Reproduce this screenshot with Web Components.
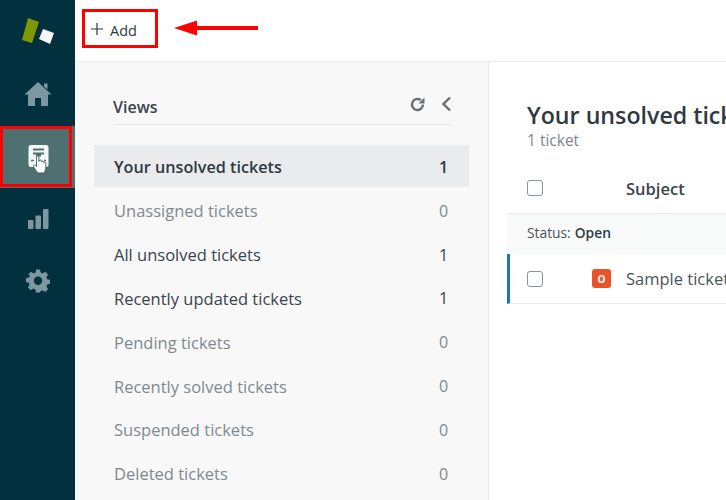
<!DOCTYPE html>
<html><head><meta charset="utf-8"><style>
html,body{margin:0;padding:0;width:726px;height:500px;overflow:hidden;background:#fff;font-family:"Open Sans","Noto Sans",sans-serif}
</style></head><body>
<app-shell></app-shell>
<script>
function def(name,css,html){
  class C extends HTMLElement{
    constructor(){super();const s=this.attachShadow({mode:'open'});s.innerHTML='<style>'+css+'</style>'+(typeof html==='function'?html(this):html);}
  }
  customElements.define(name,C);
}
def('nav-item',`:host{display:flex;align-items:center;justify-content:center;width:75px;height:62px;box-sizing:border-box;position:relative}
:host([active]){background:#4f7071}
svg{display:block}
`,'<slot></slot>');
def('nav-bar',`:host{display:flex;flex-direction:column;width:75px;height:500px;background:#03303f;flex:none;position:relative}
.logo{height:62px;display:block}
svg{display:block}
.home{height:64px}
`,`<div class="logo"><svg width="75" height="62" viewBox="0 0 75 62"><polygon points="28,18 39,22 32,43 22,40" fill="#7f9700"/><polygon points="43,29 54,33 50,44 39,39" fill="#f6f8f8"/></svg></div>
<nav-item class="home"><svg width="28" height="24" viewBox="0 0 28 24"><path d="M14 0 L27.500 12.500 L24 12.500 L24 24 L17 24 L17 16 L11 16 L11 24 L4 24 L4 12.500 L0.500 12.500 Z M20 1.500h3.500v6L20 4.500z" fill="#7c979f"/></svg></nav-item>
<nav-item active><svg width="24" height="34" viewBox="0 0 24 34"><rect x="2.500" y="5" width="20" height="22" rx="2.500" fill="#f4f7f7"/><path d="M7 9.500h11M7 13.500h11" stroke="#4f7071" stroke-width="2"/><path d="M10 13.500h5v3h-5z" fill="#4f7071"/><path d="M5 20.500h3M18 20.500h2" stroke="#4f7071" stroke-width="1.500"/><path d="M12 33c-1.500-2-3.800-4.500-4.500-6.500-.5-1.300 1-2 2-1l1 1.200V17a1.200 1.200 0 0 1 2.400 0v4.500l.3-.8c.4-1 2-.9 2.200.2l.1.800c.4-1 2-.9 2.200.2l.1.800c.5-.8 2-.6 2 .6V28c0 2-1 3.500-1.800 5z" fill="#fff" stroke="#33474e" stroke-width=".8"/></svg></nav-item>
<nav-item><svg width="22" height="22" viewBox="0 0 22 22"><rect x="1" y="12" width="5.500" height="9" rx="1" fill="#7c979f"/><rect x="8.500" y="7.500" width="5.500" height="13.500" rx="1" fill="#7c979f"/><rect x="16" y="1" width="5.500" height="20" rx="1" fill="#7c979f"/></svg></nav-item>
<nav-item><svg width="24" height="24" viewBox="0 0 24 24"><path fill="#7c979f" fill-rule="evenodd" d="M10 1h4l.6 3.100 2 .8L19.300 3.200l2.800 2.800-1.700 2.700.8 2 3.100.6v4l-3.100.6-.8 2 1.700 2.700-2.800 2.800-2.700-1.700-2 .8L14 24h-4l-.6-3.100-2-.8-2.700 1.700-2.800-2.800 1.700-2.700-.8-2L0 13.500v-4l3.100-.6.800-2L2.200 6 5 3.200l2.700 1.700 2-.8zM12 8a4.200 4.200 0 1 0 0 8.400A4.200 4.200 0 0 0 12 8z" transform="translate(0,-.5)"/></svg></nav-item>`);
def('top-bar',`:host{display:flex;align-items:center;height:62px;box-sizing:border-box;border-bottom:1px solid #e9ebed;background:#fff;position:relative;padding-left:16px;color:#2f3941;font-size:14.500px}
svg{display:block;margin-right:7px;margin-top:-3px}
`,`<svg width="12" height="12" viewBox="0 0 12 12"><path d="M6 0v12M0 6h12" stroke="#2f3941" stroke-width="1.200"/></svg><span>Add</span>`);
def('view-row',`:host{display:flex;align-items:center;justify-content:space-between;height:43.850px;padding:0 20px;box-sizing:border-box;margin-left:-19px;font-size:16.500px;color:#3a444c;white-space:nowrap}
:host([muted]){color:#808990}
:host([active]){background:#e9ebed;font-weight:600;height:42px;margin-bottom:1.850px;font-size:16.200px;color:#2f3941;padding-top:2px}
span.c{font-size:16px;width:9px;text-align:center;margin-right:1px}
`,t=>`<slot></slot><span class="c">${t.getAttribute('count')}</span>`);
def('views-panel',`:host{display:block;width:414px;flex:none;box-sizing:border-box;background:#f8f8f8;border-right:1px solid #e4e6e8;padding:0 19px 0 38px;height:438px}
.h{display:flex;align-items:center;justify-content:space-between;height:63px;border-bottom:1px solid #e4e6e8;font-size:16px;font-weight:600;color:#3a444c;box-sizing:border-box;padding-top:32px;padding-bottom:5px;margin-right:19px}
.ic{display:flex;align-items:center;gap:16px;margin-right:-2px;margin-top:-5px}
.ls{padding-top:20px}
`,`<div class="h"><span>Views</span><span class="ic"><svg width="15" height="15" viewBox="0 0 15 15"><path d="M13 7.500A5.500 5.500 0 1 1 10.800 3.100" fill="none" stroke="#66707a" stroke-width="2.400"/><path d="M14.500 .5v6h-6z" fill="#66707a"/></svg><svg width="11" height="16" viewBox="0 0 11 16"><path d="M9 1.500L2.500 8L9 14.500" fill="none" stroke="#66707a" stroke-width="2.400"/></svg></span></div><div class="ls"><slot></slot></div>`);
def('ticket-pane',`:host{display:block;flex:1;min-width:0;background:#fff;overflow:hidden;padding-left:18px;color:#2f3941}
.t{font-size:23.200px;font-weight:600;white-space:nowrap;padding:37px 0 0 20px;line-height:32px;color:#2f3941}
.s{font-size:15.500px;padding-left:20px;line-height:22px;color:#7c858c;margin-top:-2px}
.r{display:flex;align-items:center;white-space:nowrap}
.hd{height:49px;margin-top:13px;border-bottom:1px solid #e9ebed;font-size:16.500px;font-weight:600;color:#3a444c}
.box{width:14px;height:14px;border:1.500px solid #87929d;border-radius:3px;background:#fff;margin-left:20px;flex:none}
.hd .box{margin-top:-1px}
.hd span{margin-left:83px}
.st{height:40px;background:#f8f9f9;font-size:13.800px;padding-left:20px;padding-bottom:4px;box-sizing:border-box;color:#49545c}
.st b{font-weight:600;color:#2f3941;margin-left:4px}
.row{height:50px;border-left:3px solid #1f73b7;border-bottom:1px solid #e9ebed;font-size:16.500px;color:#49545c;box-sizing:border-box}
.row .box{margin-left:17px}
.o{width:19px;height:19px;border-radius:3px;background:#e9532b;color:#fff;font-size:10px;font-weight:700;display:flex;align-items:center;justify-content:center;margin-left:49px;flex:none}
.row span.x{margin-left:15px}
`,`<div class="t">Your unsolved tickets</div><div class="s">1 ticket</div>
<div class="r hd"><div class="box"></div><span>Subject</span></div>
<div class="r st">Status:<b>Open</b></div>
<div class="r row"><div class="box"></div><div class="o">O</div><span class="x">Sample ticket: Meet the ticket</span></div>`);
def('red-box',`:host{position:absolute;box-sizing:border-box;border:3px solid #f00;display:block;pointer-events:none}`,'');
def('red-arrow',`:host{position:absolute;display:block}svg{display:block}`,`<svg width="86" height="20" viewBox="0 0 86 20"><path d="M0 10L23 2.500V8H84V12H23V17.500z" fill="#f00"/></svg>`);
def('app-shell',`:host{display:flex;width:726px;height:500px;position:relative;overflow:hidden}
.col{flex:1;min-width:0;display:flex;flex-direction:column}
.body{display:flex;flex:1;min-height:0}
`,`<nav-bar></nav-bar><div class="col"><top-bar></top-bar><div class="body"><views-panel>
<view-row active count="1">Your unsolved tickets</view-row>
<view-row muted count="0">Unassigned tickets</view-row>
<view-row count="1">All unsolved tickets</view-row>
<view-row count="1">Recently updated tickets</view-row>
<view-row muted count="0">Pending tickets</view-row>
<view-row muted count="0">Recently solved tickets</view-row>
<view-row muted count="0">Suspended tickets</view-row>
<view-row muted count="0">Deleted tickets</view-row>
</views-panel><ticket-pane></ticket-pane></div></div>
<red-box style="left:82px;top:9px;width:76px;height:39px"></red-box>
<red-box style="left:0;top:126px;width:72px;height:61px"></red-box>
<red-arrow style="left:174px;top:18px"></red-arrow>`);
</script>
</body></html>
